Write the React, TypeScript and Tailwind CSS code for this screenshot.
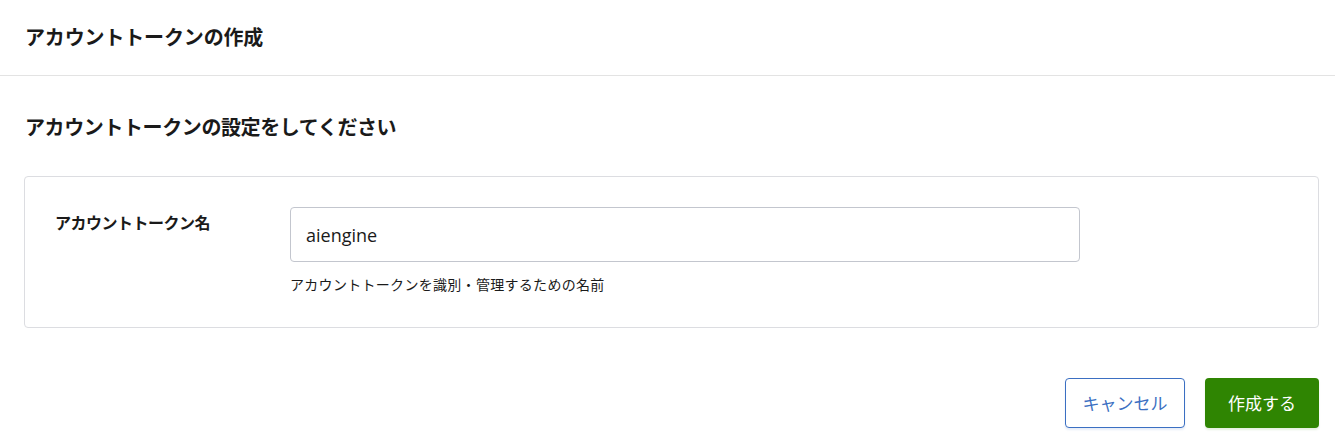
import React from 'react';

export default function App() {
    return (
        <div className="min-h-screen bg-white text-[#1a1a1a] font-['Noto_Sans_CJK_JP','Noto_Sans',sans-serif]">
            {/* Header */}
            <div className="h-[76px] border-b border-[#e3e3e3] px-[25px] flex items-center">
                <h1 className="text-[20px] font-bold leading-none -mt-[1px] tracking-[-0.15px]">アカウントトークンの作成</h1>
            </div>

            <div className="pl-[24px] pr-[16px]">
                <h2 className="text-[20px] font-bold leading-none pt-[41px] pl-[1px] tracking-[-0.4px]">アカウントトークンの設定をしてください</h2>

                {/* Form card */}
                <div className="mt-[39px] border border-[#dcdde1] rounded-[4px] h-[152px] pt-[30px] pl-[30px] flex">
                    <label className="w-[235px] text-[16px] font-bold tracking-[-0.5px] pt-[3px] leading-[24px]">
                        アカウントトークン名
                    </label>
                    <div className="flex flex-col">
                        <input
                            defaultValue="aiengine"
                            className="w-[790px] h-[55px] border border-[#c3c6ce] rounded-[4px] px-[15px] text-[18px] font-['Open_Sans',sans-serif] text-[#1a1a1a] outline-none"
                        />
                        <p className="mt-[12px] text-[14px] leading-[20px] tracking-[0.3px]">
                            アカウントトークンを識別・管理するための名前
                        </p>
                    </div>
                </div>

                {/* Actions */}
                <div className="flex justify-end gap-[20px] mt-[50px]">
                    <button className="w-[120px] h-[50px] border border-[#3b6fc2] rounded-[4px] text-[#3b6fc2] text-[17px] bg-white shadow-[0_2px_2px_rgba(59,111,194,0.12)]">
                        キャンセル
                    </button>
                    <button className="w-[114px] h-[50px] rounded-[4px] bg-[#2f8502] text-white text-[17px] shadow-[0_2px_2px_rgba(47,133,2,0.12)]">
                        作成する
                    </button>
                </div>
            </div>
        </div>
    );
}
